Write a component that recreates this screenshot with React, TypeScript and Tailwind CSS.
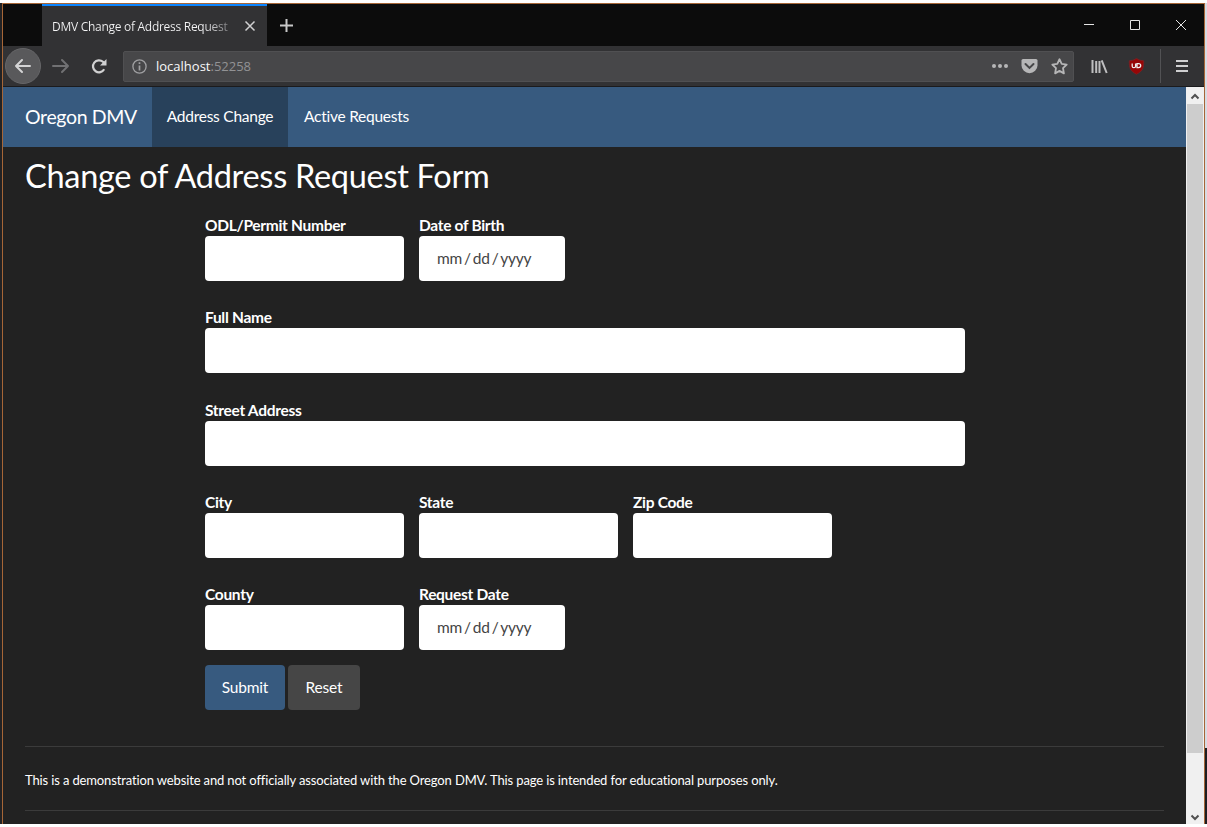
import React from "react";

function Field({ label, width, value = "" }: { label: string; width: string; value?: string }) {
  return (
    <label className={`block ${width}`}>
      <span className="block h-[19px] whitespace-nowrap text-[15.5px] leading-[17px] font-bold tracking-[-0.3px]">{label}</span>
      <span className="flex h-[45px] items-center rounded-[4px] bg-white pl-[18px] text-[15.5px] tracking-[-0.2px] whitespace-nowrap text-[#444] [word-spacing:-1.8px]">{value}</span>
    </label>
  );
}

function Tabs() {
  return (
    <div className="flex h-[42px] shrink-0 bg-[#0c0c0c]">
      <div className="ml-[39px] flex w-[225px] items-center border-t-2 border-[#0a84ff] bg-[#323234] pl-[10px]">
        <span className="w-[178px] bg-linear-to-r from-[#f4f4f5] from-85% to-[#77777a] bg-clip-text pt-px font-['Open_Sans',sans-serif] text-[12px] tracking-[-0.28px] whitespace-nowrap text-transparent">DMV Change of Address Request</span>
        <svg className="ml-[14px]" width="12" height="12" viewBox="0 0 12 12" stroke="#d0d0d1" strokeWidth="1.5"><path d="M1.5 1.5l9 9M10.5 1.5l-9 9" /></svg>
      </div>
      <svg className="mt-[14px] ml-[12px]" width="15" height="15" viewBox="0 0 15 15" stroke="#c8c8c8" strokeWidth="2"><path d="M7.5 1v13M1 7.5h13" /></svg>
      <div className="ml-auto flex items-center pr-[17px]">
        <svg width="104" height="12" viewBox="0 0 104 12" fill="none" stroke="#e6e6e6" strokeWidth="1"><path d="M1 5.5h10M47.5 1.5h9v9h-9zM93 1l10 10M103 1l-10 10" /></svg>
      </div>
    </div>
  );
}

function Toolbar() {
  return (
    <div className="flex h-[41px] shrink-0 items-center border-b border-[#1b1b1d] bg-[#323234]">
      <div className="ml-[2px] flex size-[36px] items-center justify-center rounded-full border border-[#666668] bg-[#59595b]">
        <svg width="18" height="16" viewBox="0 0 18 16" fill="none" stroke="#d4d4d5" strokeWidth="2" strokeLinecap="round" strokeLinejoin="round"><path d="M16 8H2M8 2L2 8l6 6" /></svg>
      </div>
      <svg className="ml-[11px]" width="18" height="16" viewBox="0 0 18 16" fill="none" stroke="#717173" strokeWidth="2" strokeLinecap="round" strokeLinejoin="round"><path d="M1 8h15M10 2l6 6-6 6" /></svg>
      <svg className="ml-[20px]" width="18" height="16" viewBox="0 0 18 16" fill="none" stroke="#d0d0d1" strokeWidth="2.2"><path d="M14.2 11.3A6 6 0 1 1 13 3.8l1.5 1.7" /><path d="M16.5 1v6.5H10z" fill="#d0d0d1" stroke="none" /></svg>
      <div className="ml-[15px] flex h-[31px] w-[951px] items-center rounded-[2px] border border-[#505052] bg-[#474749] pl-[8px]">
        <svg width="15" height="15" viewBox="0 0 15 15" fill="none" stroke="#a0a0a2" strokeWidth="1.3"><circle cx="7.5" cy="7.5" r="6.6" /><path d="M7.5 6.5v5M7.5 3.3v1.7" strokeWidth="1.7" /></svg>
        <span className="ml-[9px] pt-[2px] font-['Open_Sans',sans-serif] text-[13px] text-[#929294]"><span className="text-[#f9f9fa]">localhost</span>:52258</span>
        <svg className="ml-auto" width="16" height="16" viewBox="0 0 16 16" fill="#b6b6b7"><circle cx="2" cy="8" r="2" /><circle cx="8" cy="8" r="2" /><circle cx="14" cy="8" r="2" /></svg>
        <svg className="ml-[13px]" width="17" height="16" viewBox="0 0 17 16"><path d="M2 1h13q1.5 0 1.5 1.5v4.7a8 8 0 0 1-16 0V2.5Q.5 1 2 1z" fill="#b6b6b7" /><path d="M4.5 6l4 3.9 4-3.9" fill="none" stroke="#474749" strokeWidth="2" strokeLinecap="round" /></svg>
        <svg className="mr-[5px] ml-[13px]" width="17" height="17" viewBox="0 0 17 17" fill="none" stroke="#b6b6b7" strokeWidth="1.8" strokeLinejoin="round"><path d="M8.5 1.2l2.2 4.7 5 .7-3.7 3.6.9 5.2-4.4-2.5-4.4 2.5.9-5.2L1.300 6.600l5-.7z" /></svg>
      </div>
      <svg className="ml-[17px]" width="17" height="15" viewBox="0 0 17 15" fill="none" stroke="#bebebf" strokeWidth="2"><path d="M1.5 1v13M5.2 2v12M8.5 2v12M10.7 1.3l5 12.7" /></svg>
      <svg className="ml-[20px]" width="17" height="17" viewBox="0 0 17 17"><path d="M8.5 .5q3.500 2.300 7.200 2.300c0 7-.3 9.800-7.200 13.500C1.600 12.600 1.300 9.800 1.300 2.800Q5 2.800 8.500 .5z" fill="#970606" stroke="#7d2226" strokeWidth=".7" /><path d="M4.200 5.500v2.700q0 1.500 1.700 1.500t1.700-1.500V5.500M9 5.700v3.900h1.500q2.200 0 2.200-2t-2.200-1.900z" fill="none" stroke="#eee" strokeWidth="1.300" /></svg>
      <span className="ml-[15px] h-[34px] w-px bg-[#525254]" />
      <svg className="ml-[15px]" width="12" height="14" viewBox="0 0 12 14" stroke="#d0d0d1" strokeWidth="2"><path d="M0 2h12M0 7h12M0 12h12" /></svg>
    </div>
  );
}

function Page() {
  return (
    <main className="flex min-w-0 flex-1 flex-col bg-[#222] font-[Lato,sans-serif] text-white">
      <nav className="flex h-[60px] shrink-0 items-center bg-[#375a7f] text-[15.5px] tracking-[-0.25px]">
        <span className="flex h-full w-[149px] items-center pl-[22px] text-[19.5px] tracking-[-0.35px] whitespace-nowrap">Oregon DMV</span>
        <span className="flex h-full w-[136px] items-center justify-center bg-[#28415b] whitespace-nowrap">Address Change</span>
        <span className="ml-[16px] whitespace-nowrap">Active Requests</span>
      </nav>
      <h1 className="mt-[10px] ml-[22px] h-[60px] text-[32.5px] leading-[38px] tracking-[-0.29px] whitespace-nowrap">Change of Address Request Form</h1>
      <form className="ml-[202px] flex w-[760px] shrink-0 flex-col">
        <div className="flex h-[92px] gap-[15px]"><Field label="ODL/Permit Number" width="w-[199px]" /><Field label="Date of Birth" width="w-[146px]" value="mm / dd / yyyy" /></div>
        <div className="h-[93px]"><Field label="Full Name" width="w-[760px]" /></div>
        <div className="h-[92px]"><Field label="Street Address" width="w-[760px]" /></div>
        <div className="flex h-[92px] gap-[15px]"><Field label="City" width="w-[199px]" /><Field label="State" width="w-[199px]" /><Field label="Zip Code" width="w-[199px]" /></div>
        <div className="flex h-[79px] gap-[15px]"><Field label="County" width="w-[199px]" /><Field label="Request Date" width="w-[146px]" value="mm / dd / yyyy" /></div>
        <div className="flex gap-[3px] text-[15.5px] tracking-[-0.2px]">
          <button type="button" className="h-[45px] w-[80px] rounded-[4px] bg-[#375a7f]">Submit</button>
          <button type="button" className="h-[45px] w-[72px] rounded-[4px] bg-[#464646]">Reset</button>
        </div>
      </form>
      <footer className="mt-[36px] mr-[22px] ml-[22px] h-[65px] shrink-0 border-y border-[#3b3b3b] pt-[23px] text-[13px] leading-[20px] tracking-[-0.133px] whitespace-nowrap">This is a demonstration website and not officially associated with the Oregon DMV. This page is intended for educational purposes only.</footer>
    </main>
  );
}

function Scrollbar() {
  return (
    <div className="flex w-[18px] shrink-0 flex-col bg-[#f0f0f0]">
      <svg width="18" height="17" viewBox="0 0 18 17" fill="none" stroke="#505050" strokeWidth="2"><path d="M5.500 11.500L9 8l3.500 3.500" /></svg>
      <div className="mr-px ml-px h-[649px] bg-[#cdcdcd]" />
      <svg className="mt-auto" width="18" height="17" viewBox="0 0 18 17" fill="none" stroke="#505050" strokeWidth="2"><path d="M5.500 8.500L9 12l3.500-3.500" /></svg>
    </div>
  );
}

export default function App() {
  return (
    <div className="flex h-[827px] w-[1207px] flex-col overflow-hidden bg-white py-[3px]">
      <div className="flex h-[821px]">
        <div className="w-[2px] bg-[#222224]" />
        <div className="flex w-[1203px] flex-col border-x border-t border-[#a66637]">
          <Tabs />
          <Toolbar />
          <div className="flex min-h-0 flex-1"><Page /><Scrollbar /></div>
        </div>
        <div className="flex w-[2px] flex-col bg-[#d8dbe2]"><div className="mt-auto h-[76px] bg-[#1d1d20]" /></div>
      </div>
    </div>
  );
}
